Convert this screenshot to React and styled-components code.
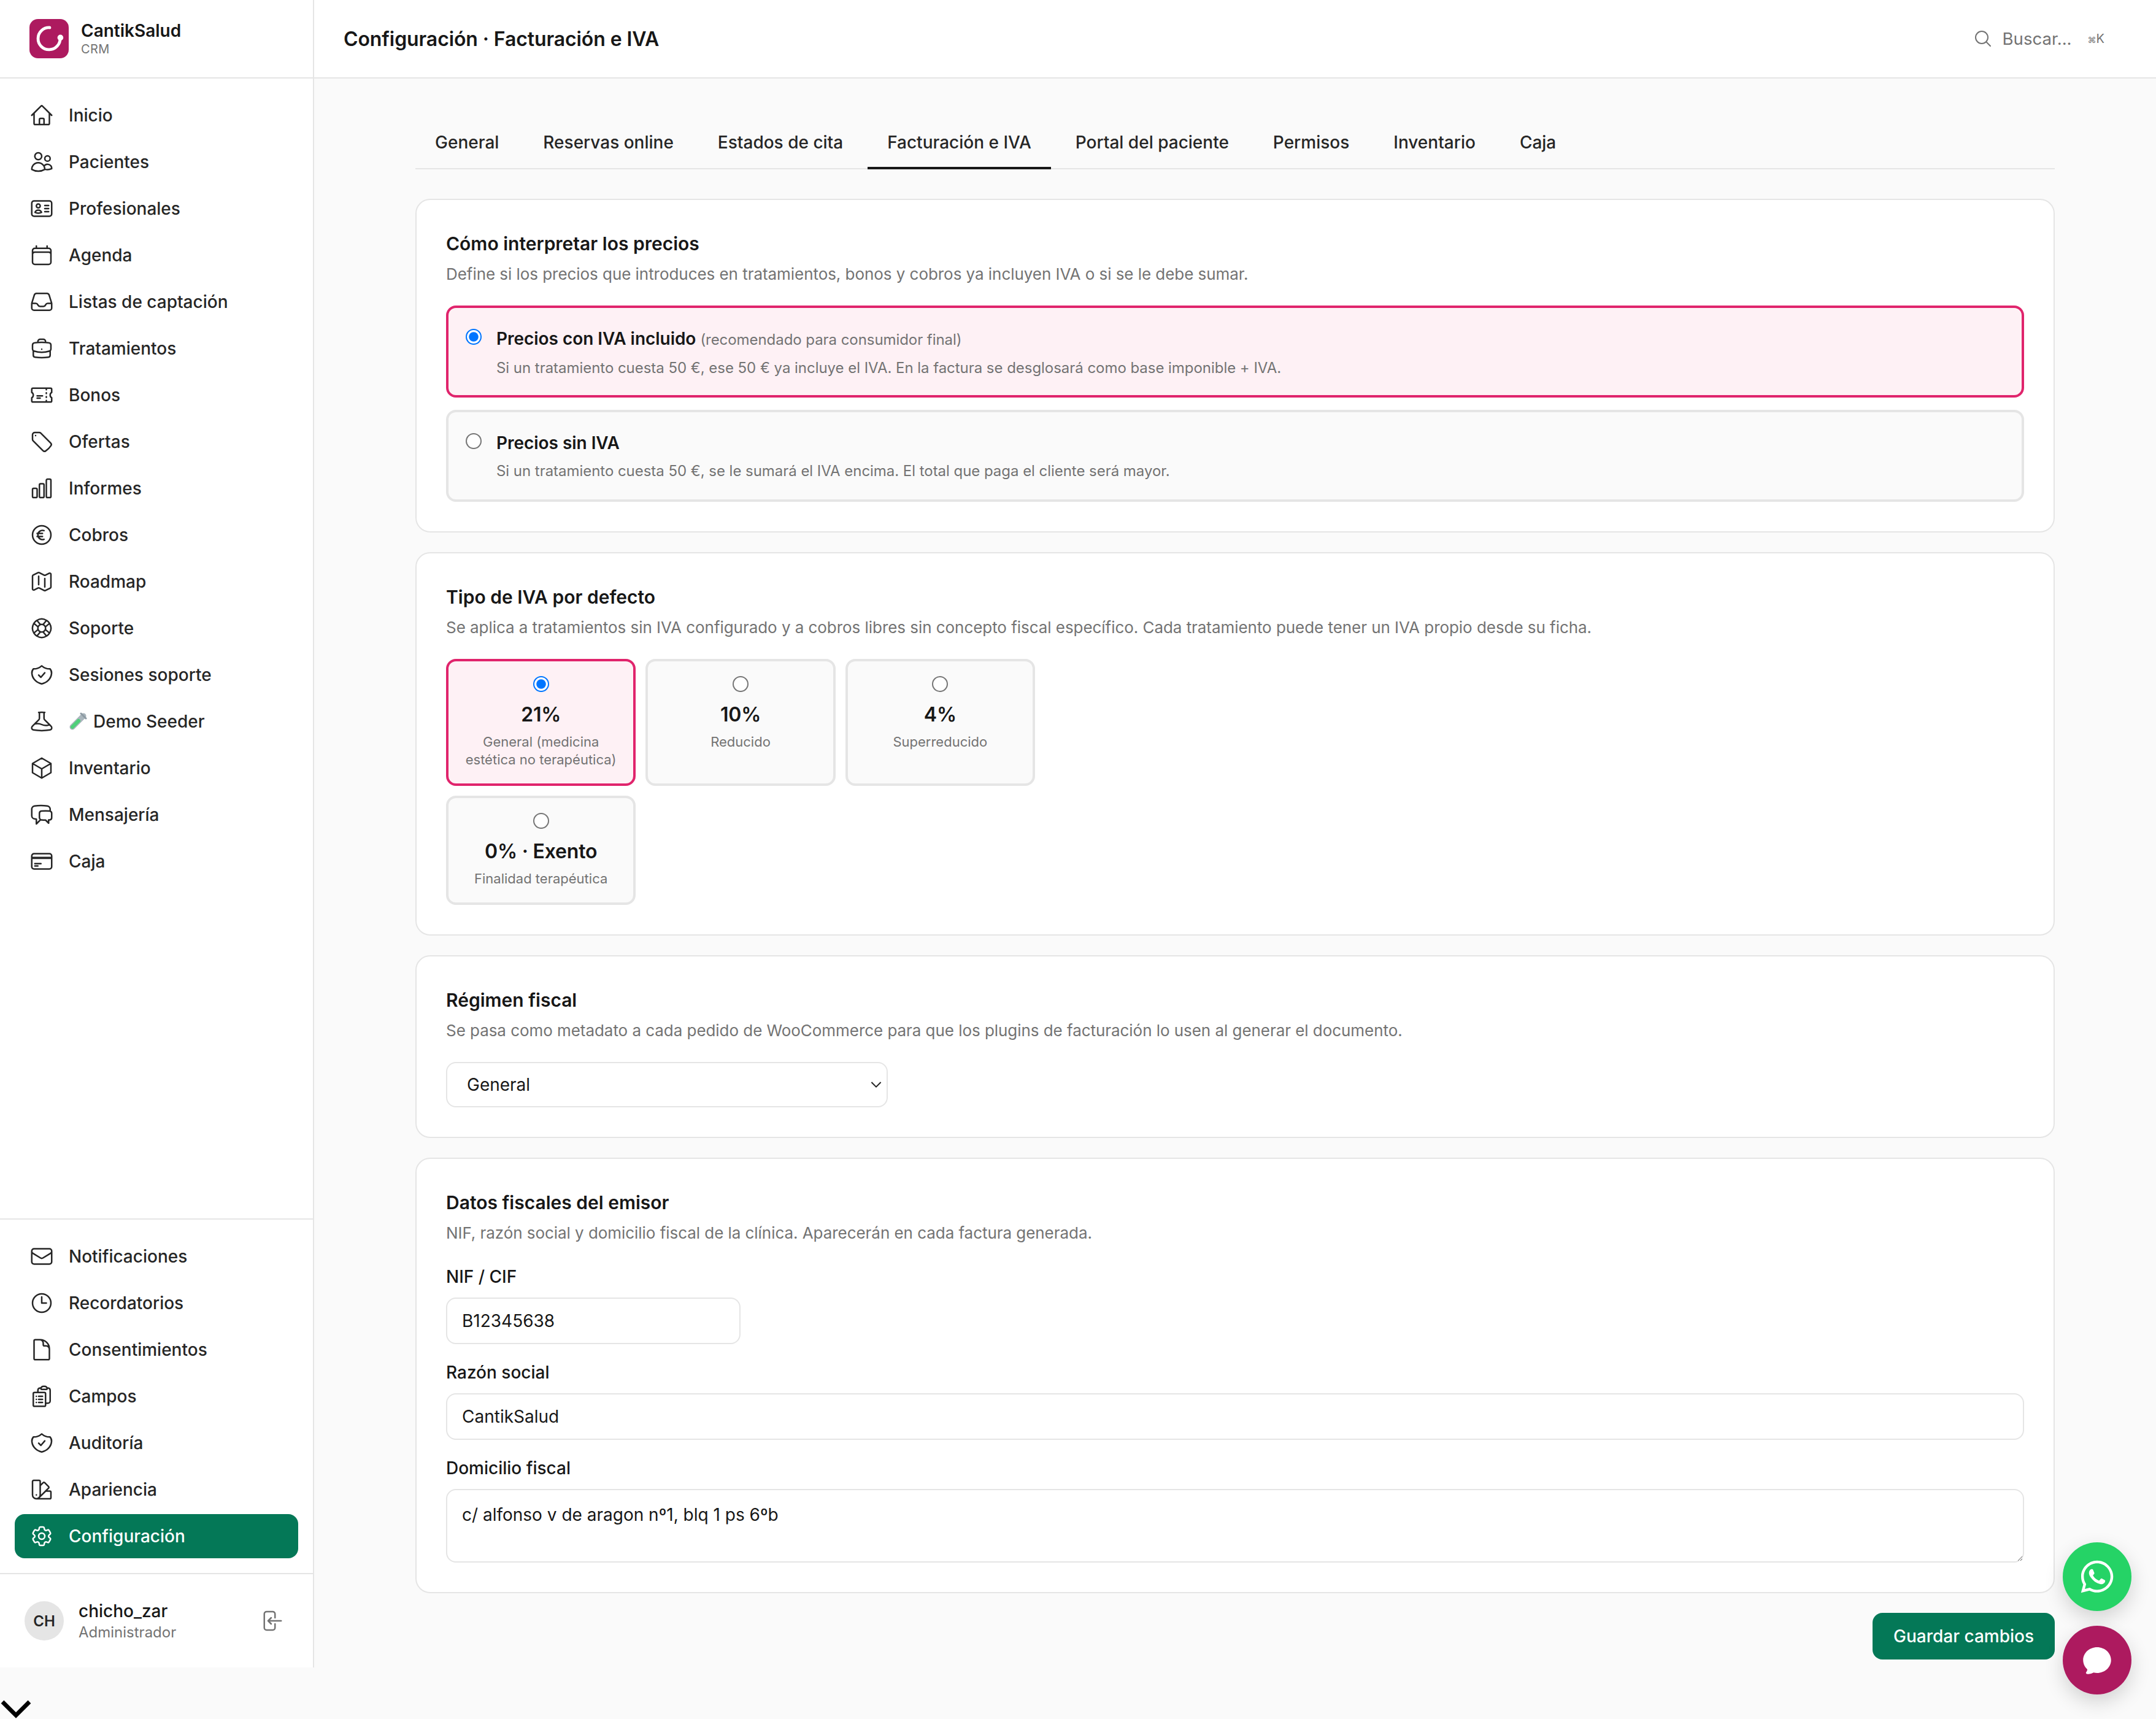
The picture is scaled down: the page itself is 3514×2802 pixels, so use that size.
import styled, { createGlobalStyle } from "styled-components";
import {
  HiOutlineHome,
  HiOutlineUsers,
  HiOutlineIdentification,
  HiOutlineCalendar,
  HiOutlineInbox,
  HiOutlineBriefcase,
  HiOutlineTicket,
  HiOutlineTag,
  HiOutlineChartBar,
  HiOutlineCurrencyEuro,
  HiOutlineMap,
  HiOutlineLifebuoy,
  HiOutlineBeaker,
  HiOutlineCube,
  HiOutlineChatBubbleLeftRight,
  HiOutlineCreditCard,
  HiOutlineEnvelope,
  HiOutlineClock,
  HiOutlineDocument,
  HiOutlineClipboardDocumentList,
  HiOutlineSwatch,
  HiOutlineCog6Tooth,
  HiOutlineArrowLeftEndOnRectangle,
  HiOutlineMagnifyingGlass,
  HiChatBubbleOvalLeft,
} from "react-icons/hi2";
import { FaWhatsapp } from "react-icons/fa";

const GlobalStyle = createGlobalStyle`
    html, body {
        margin: 0;
        padding: 0;
        background: #fafafa;
    }
    #root {
        zoom: 2;
    }
    * {
        box-sizing: border-box;
    }
    body {
        font-family: Inter, "Noto Sans", sans-serif;
        color: #171717;
    }
`;

const Page = styled.div`
    display: flex;
    flex-direction: column;
    height: 1401px;
`;

const Shell = styled.div`
    display: flex;
    height: 1359px;
`;

const Sidebar = styled.aside`
    width: 256px;
    flex-shrink: 0;
    display: flex;
    flex-direction: column;
    background: #fff;
    border-right: 1px solid #e5e5e5;
`;

const Brand = styled.div`
    height: 64px;
    flex-shrink: 0;
    display: flex;
    align-items: center;
    gap: 10px;
    padding-left: 24px;
    border-bottom: 1px solid #e5e5e5;
`;

const BrandName = styled.div`
    margin-top: 1px;
    font-size: 14px;
    line-height: 16px;
    font-weight: 600;
    color: #171717;
`;

const BrandSub = styled.div`
    font-size: 10px;
    line-height: 14px;
    letter-spacing: 0.02em;
    color: #737373;
`;

const Nav = styled.nav`
    flex: 1;
    display: flex;
    flex-direction: column;
    gap: 2px;
    padding: 12px;
`;

const BottomNav = styled(Nav)`
    flex: none;
    border-top: 1px solid #e5e5e5;
`;

const NavItem = styled.a`
    height: 36px;
    display: flex;
    align-items: center;
    gap: 12px;
    padding: 0 12px;
    border-radius: 8px;
    font-size: 14px;
    font-weight: 500;
    text-decoration: none;
    color: ${(p) => (p.$active ? "#fff" : "#262626")};
    background: ${(p) => (p.$active ? "#047857" : "transparent")};
    svg {
        flex-shrink: 0;
    }
`;

const NavLabel = styled.span`
    display: flex;
    align-items: center;
    gap: 5px;
`;

const UserRow = styled.div`
    height: 77px;
    flex-shrink: 0;
    display: flex;
    align-items: center;
    gap: 12px;
    padding: 0 24px 0 20px;
    border-top: 1px solid #e5e5e5;
`;

const Avatar = styled.div`
    width: 32px;
    height: 32px;
    flex-shrink: 0;
    border-radius: 50%;
    background: #e5e5e5;
    display: flex;
    align-items: center;
    justify-content: center;
    font-size: 12px;
    font-weight: 600;
    color: #262626;
`;

const UserInfo = styled.div`
    flex: 1;
    padding-top: 1px;
`;

const UserName = styled.div`
    font-size: 14px;
    line-height: 18px;
    font-weight: 500;
    color: #171717;
`;

const UserRole = styled.div`
    font-size: 12px;
    line-height: 17px;
    color: #737373;
`;

const Main = styled.main`
    flex: 1;
    min-width: 0;
`;

const TopBar = styled.header`
    height: 64px;
    display: flex;
    align-items: center;
    justify-content: space-between;
    padding: 0 42px 0 24px;
    background: #fff;
    border-bottom: 1px solid #e5e5e5;
`;

const PageTitle = styled.h1`
    margin: 0;
    font-size: 16px;
    font-weight: 600;
    letter-spacing: -0.05px;
    color: #171717;
`;

const Search = styled.div`
    display: flex;
    align-items: center;
    color: #737373;
    font-size: 13.8px;
    gap: 8px;
`;

const Shortcut = styled.span`
    margin-left: 5px;
    font-size: 10px;
`;

const ShortcutSymbol = styled.span`
    font-size: 7px;
`;

const Content = styled.div`
    max-width: 1336px;
    margin: 0 auto;
    padding-top: 29px;
    display: flex;
    flex-direction: column;
`;

const Tabs = styled.div`
    display: flex;
    gap: 4px;
    height: 45px;
    border-bottom: 1px solid #e5e5e5;
    margin-bottom: 24px;
`;

const Tab = styled.a`
    height: 45px;
    padding: 13px 16px 0;
    font-size: 14px;
    line-height: 20px;
    font-weight: 500;
    color: #262626;
    border-bottom: 2px solid ${(p) => (p.$active ? "#171717" : "transparent")};
`;

const Card = styled.section`
    background: #fff;
    border: 1px solid #e5e5e5;
    border-radius: 12px;
    padding: 24px;
    margin-bottom: 16px;
`;

const CardTitle = styled.h2`
    margin: 0 0 3.5px;
    font-size: 15px;
    line-height: 23px;
    font-weight: 600;
    color: #171717;
`;

const CardHint = styled.p`
    margin: 0 0 15.5px;
    font-size: 13px;
    line-height: 20px;
    letter-spacing: -0.025px;
    color: #737373;
`;

const OptionStack = styled.div`
    display: flex;
    flex-direction: column;
    gap: 10px;
`;

const Option = styled.label`
    height: 75px;
    display: flex;
    align-items: flex-start;
    gap: 12px;
    padding: 15px 14px;
    border-radius: 8px;
    border: 2px solid ${(p) => (p.$selected ? "#e0246c" : "#e5e5e5")};
    background: ${(p) => (p.$selected ? "#fef1f5" : "#fafafa")};
`;

const Radio = styled.input`
    margin: 2px 0 0;
    flex-shrink: 0;
`;

const OptionTitle = styled.div`
    font-size: 14px;
    line-height: 20px;
    font-weight: 600;
    letter-spacing: -0.02px;
    color: #171717;
    margin-bottom: 5px;
`;

const OptionNote = styled.span`
    font-size: 12px;
    font-weight: 400;
    letter-spacing: -0.03px;
    color: #737373;
`;

const OptionText = styled.div`
    font-size: 12px;
    line-height: 16px;
    letter-spacing: -0.02px;
    color: #737373;
`;

const VatGrid = styled.div`
    display: grid;
    grid-template-columns: repeat(3, 1fr);
    gap: 8px;
    max-width: 480px;
`;

const VatOption = styled.label`
    display: flex;
    flex-direction: column;
    align-items: center;
    text-align: center;
    padding: 12px;
    border-radius: 8px;
    border: 2px solid ${(p) => (p.$selected ? "#e0246c" : "#e5e5e5")};
    background: ${(p) => (p.$selected ? "#fef1f5" : "#fafafa")};
`;

const VatRadio = styled.input`
    margin: 0;
`;

const VatValue = styled.div`
    margin-top: 6.5px;
    font-size: 16px;
    line-height: 24px;
    font-weight: 600;
    letter-spacing: -0.1px;
    color: #171717;
`;

const VatNote = styled.div`
    margin-top: 3px;
    font-size: 11px;
    line-height: 14.5px;
    color: #737373;
`;

const Select = styled.select`
    display: block;
    width: 360px;
    height: 37px;
    padding: 0 24px 0 16px;
    appearance: none;
    font: 14px Inter, sans-serif;
    color: #171717;
    background: #fff url("data:image/svg+xml,%3Csvg xmlns='http://www.w3.org/2000/svg' width='9' height='6' viewBox='0 0 9 6'%3E%3Cpath d='M.7 1l3.8 3.8L8.3 1' fill='none' stroke='%23262626' stroke-width='1'/%3E%3C/svg%3E") no-repeat right 4px center;
    border: 1px solid #e5e5e5;
    border-radius: 8px;
`;

const Field = styled.div`
    margin-bottom: 13px;
    &:last-child {
        margin-bottom: 0;
    }
`;

const FieldLabel = styled.label`
    display: block;
    font-size: 14px;
    line-height: 20px;
    font-weight: 500;
    color: #171717;
    margin-bottom: 7px;
`;

const TextInput = styled.input`
    display: block;
    width: ${(p) => p.$width || "100%"};
    height: 38px;
    padding: 0 12px;
    font: 14px Inter, sans-serif;
    color: #171717;
    background: #fff;
    border: 1px solid #e5e5e5;
    border-radius: 8px;
`;

const TextArea = styled.textarea`
    display: block;
    width: 100%;
    height: 60px;
    padding: 10px 12px;
    font: 14px/20px Inter, sans-serif;
    color: #171717;
    background: #fff;
    border: 1px solid #e5e5e5;
    border-radius: 8px;
`;

const Actions = styled.div`
    display: flex;
    justify-content: flex-end;
`;

const SaveButton = styled.button`
    height: 38px;
    padding: 0 17px;
    border: none;
    border-radius: 8px;
    background: #047857;
    color: #fff;
    font: 500 14px Inter, sans-serif;
`;

const BottomStrip = styled.div`
    flex: 1;
    display: flex;
    align-items: flex-end;
`;

const FloatingStack = styled.div`
    position: fixed;
    right: 20px;
    bottom: 20px;
    display: flex;
    flex-direction: column;
    gap: 12px;
`;

const Fab = styled.button`
    width: 56px;
    height: 56px;
    border: none;
    border-radius: 50%;
    display: flex;
    align-items: center;
    justify-content: center;
    color: #fff;
    background: ${(p) => p.$bg};
    box-shadow: 0 6px 16px rgba(0, 0, 0, 0.16);
`;

function Logo() {
    return (
        <svg width="32" height="32" viewBox="0 0 32 32" style={{ flexShrink: 0 }}>
            <rect width="32" height="32" rx="7" fill="#ad1a5f" />
            <path
                d="M16.5 7 A9 9 0 1 0 25 15.5"
                fill="none"
                stroke="#fff"
                strokeWidth="2.4"
                strokeLinecap="round"
            />
            <circle cx="25.2" cy="15.2" r="2.4" fill="#fff" />
        </svg>
    );
}

function TestTube() {
    return (
        <svg width="15" height="15" viewBox="0 0 30 30" fill="none" strokeLinecap="round">
            <path d="M6 24 L24 6" stroke="#a9b5bc" strokeWidth="9" />
            <path d="M6 24 L16 14" stroke="#4fd07a" strokeWidth="6" />
            <path d="M20 2 L28 10" stroke="#8d9aa3" strokeWidth="3" />
        </svg>
    );
}

// rounder than the stock heroicons shield
function ShieldIcon({ size }) {
    return (
        <svg width={size} height={size} viewBox="0 0 24 24" fill="none" stroke="currentColor" strokeWidth="1.5" strokeLinecap="round" strokeLinejoin="round">
            <path d="M12 3.2C14.3 5.2 17.3 6.3 20.2 6.2C21.2 7.4 21.8 9 21.6 10.8C21 16 17 19.8 12 20.8C7 19.8 3 16 2.4 10.8C2.2 9 2.8 7.4 3.8 6.2C6.7 6.3 9.7 5.2 12 3.2Z" />
            <path d="M9 12.2l2.2 2.2L15 10" />
        </svg>
    );
}

function Chevron() {
    return (
        <svg width="26" height="17" viewBox="0 0 26 17" fill="none">
            <path d="M2 3 L13 14 L24 3" stroke="#000" strokeWidth="3.4" />
        </svg>
    );
}

const mainNav = [
    { label: "Inicio", icon: HiOutlineHome },
    { label: "Pacientes", icon: HiOutlineUsers },
    { label: "Profesionales", icon: HiOutlineIdentification },
    { label: "Agenda", icon: HiOutlineCalendar },
    { label: "Listas de captación", icon: HiOutlineInbox },
    { label: "Tratamientos", icon: HiOutlineBriefcase },
    { label: "Bonos", icon: HiOutlineTicket },
    { label: "Ofertas", icon: HiOutlineTag },
    { label: "Informes", icon: HiOutlineChartBar },
    { label: "Cobros", icon: HiOutlineCurrencyEuro },
    { label: "Roadmap", icon: HiOutlineMap },
    { label: "Soporte", icon: HiOutlineLifebuoy },
    { label: "Sesiones soporte", icon: ShieldIcon },
    { label: "Demo Seeder", icon: HiOutlineBeaker, tube: true },
    { label: "Inventario", icon: HiOutlineCube },
    { label: "Mensajería", icon: HiOutlineChatBubbleLeftRight },
    { label: "Caja", icon: HiOutlineCreditCard },
];

const bottomNav = [
    { label: "Notificaciones", icon: HiOutlineEnvelope },
    { label: "Recordatorios", icon: HiOutlineClock },
    { label: "Consentimientos", icon: HiOutlineDocument },
    { label: "Campos", icon: HiOutlineClipboardDocumentList },
    { label: "Auditoría", icon: ShieldIcon },
    { label: "Apariencia", icon: HiOutlineSwatch },
    { label: "Configuración", icon: HiOutlineCog6Tooth, active: true },
];

const tabs = [
    "General",
    "Reservas online",
    "Estados de cita",
    "Facturación e IVA",
    "Portal del paciente",
    "Permisos",
    "Inventario",
    "Caja",
];

const vatTypes = [
    { value: "21%", note: "General (medicina estética no terapéutica)", selected: true },
    { value: "10%", note: "Reducido" },
    { value: "4%", note: "Superreducido" },
    { value: "0% · Exento", note: "Finalidad terapéutica" },
];

function NavEntry({ item }) {
    const Icon = item.icon;
    return (
        <NavItem $active={item.active}>
            <Icon size={20} />
            <NavLabel>
                {item.tube && <TestTube />}
                {item.label}
            </NavLabel>
        </NavItem>
    );
}

export default function App() {
    return (
        <Page>
            <GlobalStyle />
            <Shell>
                <Sidebar>
                    <Brand>
                        <Logo />
                        <div>
                            <BrandName>CantikSalud</BrandName>
                            <BrandSub>CRM</BrandSub>
                        </div>
                    </Brand>
                    <Nav>
                        {mainNav.map((item) => (
                            <NavEntry key={item.label} item={item} />
                        ))}
                    </Nav>
                    <BottomNav>
                        {bottomNav.map((item) => (
                            <NavEntry key={item.label} item={item} />
                        ))}
                    </BottomNav>
                    <UserRow>
                        <Avatar>CH</Avatar>
                        <UserInfo>
                            <UserName>chicho_zar</UserName>
                            <UserRole>Administrador</UserRole>
                        </UserInfo>
                        <HiOutlineArrowLeftEndOnRectangle size={20} color="#737373" />
                    </UserRow>
                </Sidebar>
                <Main>
                    <TopBar>
                        <PageTitle>Configuración · Facturación e IVA</PageTitle>
                        <Search>
                            <HiOutlineMagnifyingGlass size={16} />
                            Buscar...
                            <Shortcut><ShortcutSymbol>⌘</ShortcutSymbol>K</Shortcut>
                        </Search>
                    </TopBar>
                    <Content>
                        <Tabs>
                            {tabs.map((t) => (
                                <Tab key={t} $active={t === "Facturación e IVA"}>{t}</Tab>
                            ))}
                        </Tabs>

                        <Card>
                            <CardTitle>Cómo interpretar los precios</CardTitle>
                            <CardHint>
                                Define si los precios que introduces en tratamientos, bonos y cobros ya incluyen IVA o si se le debe sumar.
                            </CardHint>
                            <OptionStack>
                                <Option $selected>
                                    <Radio type="radio" name="prices" defaultChecked />
                                    <div>
                                        <OptionTitle>
                                            Precios con IVA incluido <OptionNote>(recomendado para consumidor final)</OptionNote>
                                        </OptionTitle>
                                        <OptionText>
                                            Si un tratamiento cuesta 50 €, ese 50 € ya incluye el IVA. En la factura se desglosará como base imponible + IVA.
                                        </OptionText>
                                    </div>
                                </Option>
                                <Option>
                                    <Radio type="radio" name="prices" />
                                    <div>
                                        <OptionTitle>Precios sin IVA</OptionTitle>
                                        <OptionText>
                                            Si un tratamiento cuesta 50 €, se le sumará el IVA encima. El total que paga el cliente será mayor.
                                        </OptionText>
                                    </div>
                                </Option>
                            </OptionStack>
                        </Card>

                        <Card>
                            <CardTitle>Tipo de IVA por defecto</CardTitle>
                            <CardHint>
                                Se aplica a tratamientos sin IVA configurado y a cobros libres sin concepto fiscal específico. Cada tratamiento puede tener un IVA propio desde su ficha.
                            </CardHint>
                            <VatGrid>
                                {vatTypes.map((v) => (
                                    <VatOption key={v.value} $selected={v.selected}>
                                        <VatRadio type="radio" name="vat" defaultChecked={v.selected} />
                                        <VatValue>{v.value}</VatValue>
                                        <VatNote>{v.note}</VatNote>
                                    </VatOption>
                                ))}
                            </VatGrid>
                        </Card>

                        <Card>
                            <CardTitle>Régimen fiscal</CardTitle>
                            <CardHint>
                                Se pasa como metadato a cada pedido de WooCommerce para que los plugins de facturación lo usen al generar el documento.
                            </CardHint>
                            <Select defaultValue="general">
                                <option value="general">General</option>
                            </Select>
                        </Card>

                        <Card>
                            <CardTitle>Datos fiscales del emisor</CardTitle>
                            <CardHint>
                                NIF, razón social y domicilio fiscal de la clínica. Aparecerán en cada factura generada.
                            </CardHint>
                            <Field>
                                <FieldLabel>NIF / CIF</FieldLabel>
                                <TextInput $width="240px" defaultValue="B12345638" />
                            </Field>
                            <Field>
                                <FieldLabel>Razón social</FieldLabel>
                                <TextInput defaultValue="CantikSalud" />
                            </Field>
                            <Field>
                                <FieldLabel>Domicilio fiscal</FieldLabel>
                                <TextArea defaultValue="c/ alfonso v de aragon nº1, blq 1 ps 6ºb" />
                            </Field>
                        </Card>

                        <Actions>
                            <SaveButton>Guardar cambios</SaveButton>
                        </Actions>
                    </Content>
                </Main>
            </Shell>
            <BottomStrip>
                <Chevron />
            </BottomStrip>
            <FloatingStack>
                <Fab $bg="#25d366">
                    <FaWhatsapp size={30} />
                </Fab>
                <Fab $bg="#ad1a5f">
                    <HiChatBubbleOvalLeft size={28} />
                </Fab>
            </FloatingStack>
        </Page>
    );
}
